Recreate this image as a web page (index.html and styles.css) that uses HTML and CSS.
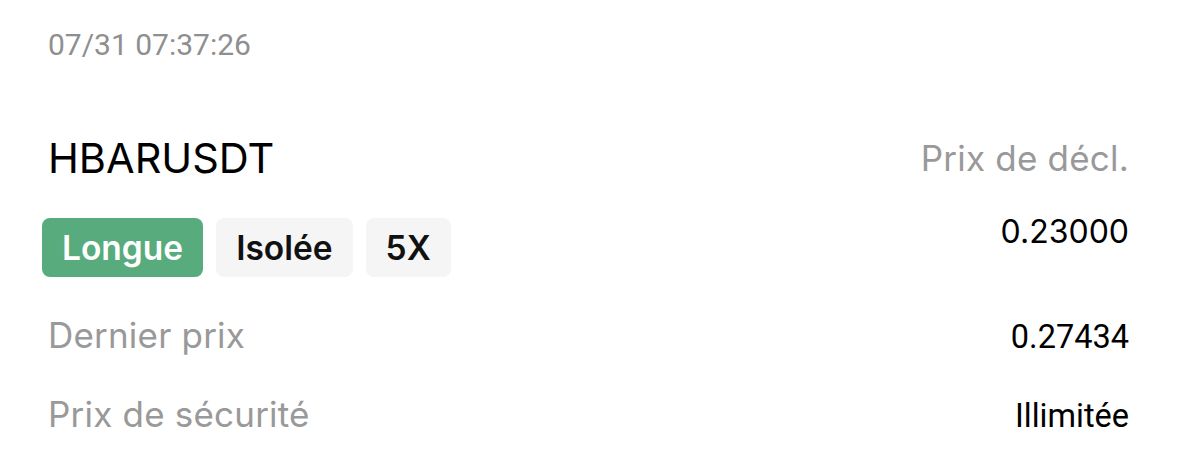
FILE: index.html
```html
<!DOCTYPE html>
<html lang="fr">
<head>
<meta charset="utf-8">
<link rel="stylesheet" href="styles.css">
</head>
<body>
<div class="card">
  <div class="date">07/31 07:37:26</div>
  <div class="head">
    <div class="left">
      <div class="symbol">HBARUSDT</div>
      <div class="tags">
        <span class="tag long">Longue</span>
        <span class="tag">Isolée</span>
        <span class="tag">5X</span>
      </div>
    </div>
    <div class="right">
      <div class="label">Prix de décl.</div>
      <div class="trigger">0.23000</div>
    </div>
  </div>
  <div class="row">
    <span class="label">Dernier prix</span>
    <span class="value">0.27434</span>
  </div>
  <div class="row">
    <span class="label">Prix de sécurité</span>
    <span class="value">Illimitée</span>
  </div>
</div>
</body>
</html>
```
FILE: styles.css
```css
html, body {
  margin: 0;
  padding: 0;
  background: #ffffff;
}
.card {
  padding: 30px 50px 0 48px;
  font-family: Inter, "Noto Sans", sans-serif;
}
.date {
  font-family: Roboto, sans-serif;
  font-size: 30px;
  line-height: 30px;
  color: #8f8f8f;
}
.head {
  display: flex;
  justify-content: space-between;
  margin-top: 78px;
}
.symbol {
  font-size: 41.5px;
  line-height: 40px;
  color: #000;
}
.tags {
  display: flex;
  gap: 13px;
  margin-top: 40px;
  margin-left: -6px;
}
.tag {
  height: 59px;
  padding: 0 20px;
  display: flex;
  align-items: center;
  border-radius: 8px;
  background: #f5f5f5;
  color: #111;
  font-weight: 600;
  font-size: 33.5px;
}
.tag.long {
  background: #57ab7c;
  color: #fff;
}
.right {
  text-align: right;
}
.label {
  color: #999999;
  font-size: 35px;
  letter-spacing: 0.2px;
}
.right .label {
  line-height: 40px;
}
.trigger {
  font-size: 32px;
  line-height: 40px;
  margin-top: 34px;
  color: #000;
}
.row {
  display: flex;
  justify-content: space-between;
  align-items: baseline;
  margin-top: 33px;
  line-height: 50px;
}
.row + .row {
  margin-top: 27px;
}
.value {
  font-family: Roboto, sans-serif;
  font-size: 32.5px;
  color: #000;
}
```
